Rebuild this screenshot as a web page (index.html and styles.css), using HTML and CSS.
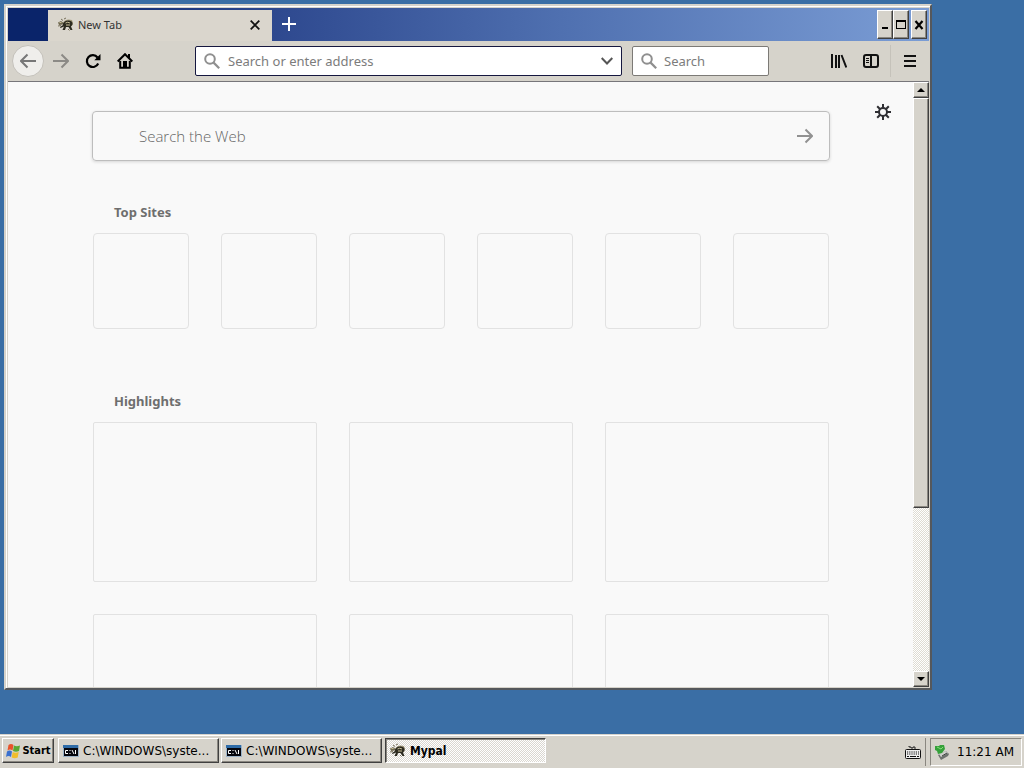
FILE: index.html
```html
<!DOCTYPE html>
<html lang="en">
<head>
<meta charset="utf-8">
<title>New Tab</title>
<link rel="stylesheet" href="styles.css">
</head>
<body>
<svg class="defs" aria-hidden="true">
  <symbol id="turtle" viewBox="0 0 16 16">
    <path d="M5 5.500Q8 1 14 3l1 3-1 3H9L5 9z" fill="#a39a7c"/>
    <path d="M0 5.500l3-1.500 2 1.500v2L1 8z" fill="#6e6850"/>
    <path d="M5 6.500Q7 3 11 3.500t3.500 4L13 9.500l1.500 3.500h-2L10.500 10H8l-1 3H4.500L6 9.500 2.500 11 2 10l3-2z" fill="#2c2b20"/>
    <path d="M7.500 6q2-1.500 4.500 0M8 8h4M1.500 5.500h2" stroke="#c8bf96" fill="none"/>
    <path d="M3 2l2 1.500M6 2l2-1M0 9l3-.5M10 12l1.500 1.500" stroke="#77705a" fill="none"/>
  </symbol>
  <symbol id="console" viewBox="0 0 16 16">
    <path d="M0 2h16v12H0z" fill="#9cb3c8"/>
    <path d="M0 2h15v3H0z" fill="#2f6ca8"/>
    <path d="M1 5h14v8H1z" fill="#05060c"/>
    <path d="M5 7.500H2.500v3H5M7 7v1M7 10v1M9 7l2 4M12.500 7v4" stroke="#fff" fill="none"/>
  </symbol>
  <symbol id="lens" viewBox="0 0 16 16">
    <circle cx="6" cy="6" r="4.800" fill="none" stroke="#8f8f8f" stroke-width="2"/>
    <path d="M9.600 9.600l5.600 5.600" stroke="#8f8f8f" stroke-width="2.200"/>
  </symbol>
  <symbol id="arrow" viewBox="0 0 16 16">
    <path d="M0 8h14.500M8.500 1.500L15 8l-6.500 6.500" fill="none" stroke="currentColor" stroke-width="2"/>
  </symbol>
</svg>

<div class="desktop">
  <section class="window">
    <header class="titlebar">
      <div class="tab">
        <svg class="icon"><use href="#turtle"/></svg>
        <span class="tab-title">New Tab</span>
        <button class="flat tab-close" aria-label="Close tab"><svg viewBox="0 0 10 10"><path d="M.7.7l8.600 8.600M9.300.7L.7 9.300" stroke="#111" stroke-width="1.800"/></svg></button>
      </div>
      <button class="flat new-tab" aria-label="New tab"><svg viewBox="0 0 14 14"><path d="M7 0v14M0 7h14" stroke="#fff" stroke-width="2"/></svg></button>
      <div class="controls">
        <button class="raised" aria-label="Minimize"><svg viewBox="0 0 12 12"><path d="M3 8h6v2H3z"/></svg></button>
        <button class="raised" aria-label="Maximize"><svg viewBox="0 0 12 12"><path d="M1 1h10v9H1zM2 3v6h8V3z" fill-rule="evenodd"/></svg></button>
        <button class="raised close" aria-label="Close"><svg viewBox="0 0 12 12"><path d="M2.500 2l7 8M9.500 2l-7 8" stroke="#000" stroke-width="2.200"/></svg></button>
      </div>
    </header>

    <nav class="toolbar" aria-label="Navigation">
      <button class="flat tool back" aria-label="Back"><svg class="icon flip"><use href="#arrow"/></svg></button>
      <button class="flat tool dim" aria-label="Forward"><svg class="icon"><use href="#arrow"/></svg></button>
      <button class="flat tool" aria-label="Reload"><svg class="icon" viewBox="0 0 16 16"><path d="M13.200 10.500A5.900 5.900 0 1 1 12.500 4.500" fill="none" stroke="#000" stroke-width="2.200"/><path d="M15.500 1v6.200H9.300z"/></svg></button>
      <button class="flat tool" aria-label="Home"><svg class="icon" viewBox="0 0 16 16"><path d="M.7 8.500L8 1.200l7.300 7.300" fill="none" stroke="#000" stroke-width="2"/><path d="M3.200 8v6.800h9.600V8" fill="none" stroke="#000" stroke-width="2"/><path d="M6 8h4v6H6zM11 1h2v4h-2z"/></svg></button>
      <div class="field address">
        <svg class="icon"><use href="#lens"/></svg>
        <input type="text" aria-label="Address" placeholder="Search or enter address">
        <button class="flat" aria-label="Show history"><svg class="chevron" viewBox="0 0 12 8"><path d="M.7 1L6 6.500 11.300 1" fill="none" stroke="#555" stroke-width="2"/></svg></button>
      </div>
      <div class="field quick">
        <svg class="icon"><use href="#lens"/></svg>
        <input type="text" aria-label="Search" placeholder="Search">
      </div>
      <div class="tools-end">
        <button class="flat tool" aria-label="Library"><svg class="icon" viewBox="0 0 16 16"><path d="M1 1v14M5 2v13M8 2v13M10.500 2l4.800 12.500" fill="none" stroke="#111" stroke-width="2"/></svg></button>
        <button class="flat tool" aria-label="Sidebars"><svg class="icon" viewBox="0 0 16 16"><rect x="1" y="2" width="14" height="12" rx="2" fill="none" stroke="#111" stroke-width="2"/><path d="M8 2v12" stroke="#111" stroke-width="2"/><path d="M3 5.500h3M3 7.500h3M3 9.500h3" stroke="#111"/></svg></button>
        <button class="flat tool menu" aria-label="Open menu"><svg class="icon" viewBox="0 0 16 16"><path d="M2 3h12M2 8h12M2 13h12" stroke="#111" stroke-width="2"/></svg></button>
      </div>
    </nav>

    <div class="viewport">
      <main class="page">
        <button class="flat gear" aria-label="Customize"><svg class="icon" viewBox="0 0 16 16"><circle cx="8" cy="8" r="4" fill="none" stroke="#2f2f33" stroke-width="2"/><path d="M8 0v4M8 12v4M0 8h4M12 8h4M2.200 2.200l3 3M10.800 10.800l3 3M2.200 13.800l3-3M10.800 5.200l3-3" stroke="#2f2f33" stroke-width="2"/></svg></button>
        <form class="web-search">
          <input type="text" aria-label="Search the Web" placeholder="Search the Web">
          <button class="flat" type="button" aria-label="Submit search"><svg class="icon"><use href="#arrow"/></svg></button>
        </form>
        <section class="sites">
          <h2>Top Sites</h2>
          <div class="grid six"><div></div><div></div><div></div><div></div><div></div><div></div></div>
        </section>
        <section>
          <h2>Highlights</h2>
          <div class="grid three"><div></div><div></div><div></div><div></div><div></div><div></div></div>
        </section>
      </main>
      <div class="scrollbar">
        <button class="raised" aria-label="Scroll up"><svg viewBox="0 0 8 4"><path d="M0 4l4-4 4 4z"/></svg></button>
        <div class="thumb raised"></div>
        <div class="track"></div>
        <button class="raised" aria-label="Scroll down"><svg viewBox="0 0 8 4"><path d="M0 0l4 4 4-4z"/></svg></button>
      </div>
    </div>
  </section>
</div>

<footer class="taskbar">
  <button class="raised start">
    <svg class="icon" viewBox="0 0 16 16"><path d="M3.500 2q2.500-2 5 0l-1 5.500q-2.500-2-5 0z" fill="#e8532a"/><path d="M9 2.500q2.500 1.500 6 0L14 8q-3 1.500-6 0z" fill="#5aa832"/><path d="M2 8.500q2.500-2 5 0l-1 5.500q-2.500-2-5 0z" fill="#3a70cf"/><path d="M7.700 9q2.500 1.500 6 0l-1 5.500q-3 1.500-6 0z" fill="#f0bd2c"/></svg>
    Start
  </button>
  <button class="raised task"><svg class="icon"><use href="#console"/></svg><span>C:\WINDOWS\syste...</span></button>
  <button class="raised task"><svg class="icon"><use href="#console"/></svg><span>C:\WINDOWS\syste...</span></button>
  <button class="task active"><svg class="icon"><use href="#turtle"/></svg><span>Mypal</span></button>
  <button class="flat keyboard" aria-label="Input language"><svg class="icon" viewBox="0 0 16 16"><path d="M4 2v1h2v1h2V3h2v2" fill="none" stroke="#222"/><rect x=".5" y="5.500" width="15" height="9" rx="1" fill="#eee" stroke="#111"/><path d="M2 8h12M2 10h12" stroke="#111" stroke-width="1.200" stroke-dasharray="1.200 1"/><path d="M2 12.500h2M5 12.500h6M12 12.500h2" stroke="#111"/></svg></button>
  <div class="tray">
    <svg class="icon" viewBox="0 0 16 16"><path d="M4 11l8-4 3 3-1 2-7 4z" fill="#6d716e"/><path d="M5 10l7-3 2 2-7 4z" fill="#cdd0cb"/><path d="M8 12l5-3" stroke="#3c3f3d"/><path d="M1 2h4l1-1 4 0 1 4-3 4-4 1-1-3-2-1z" fill="#35a13a"/><path d="M3 3l4 2 2-2" stroke="#87e07a" fill="none"/></svg>
    <time>11:21 AM</time>
  </div>
</footer>
</body>
</html>
```

FILE: styles.css
```css
* { box-sizing: border-box; }

:root {
  --face: #d6d3cb;
  --navy: #0a246a;
  --ui: "Noto Sans", "Open Sans", sans-serif;
  --classic: "DejaVu Sans", sans-serif;
  --classic-narrow: "DejaVu Sans Condensed", "DejaVu Sans", sans-serif;
}

body {
  margin: 0;
  height: 100vh;
  display: flex;
  flex-direction: column;
  overflow: hidden;
  background: #3a6ea5;
  font-family: var(--ui);
}

.defs { display: none; }
svg { display: block; flex: none; }
.icon { width: 16px; height: 16px; }

button {
  display: flex;
  align-items: center;
  justify-content: center;
  margin: 0;
  padding: 0;
  border: 0;
  color: #000;
  font: inherit;
}
.flat { background: none; }

.raised {
  background: var(--face);
  border: 1px solid;
  border-color: #fff #404040 #404040 #fff;
  box-shadow: inset -1px -1px #8a8780;
}

input {
  flex: 1;
  min-width: 0;
  padding: 0;
  border: 0;
  outline: 0;
  background: none;
  font: inherit;
  color: #333;
}
input::placeholder { color: #7c7c7c; opacity: 1; }

.desktop {
  flex: 1;
  min-height: 0;
  display: flex;
  padding: 4px 92px 44px 4px;
}

.window {
  flex: 1;
  min-width: 0;
  display: flex;
  flex-direction: column;
  padding: 2px 1px 1px 2px;
  border: 2px solid;
  border-color: #d6d3cb #55585c #55585c #d6d3cb;
  background: var(--face);
  box-shadow: inset 1px 1px #fff;
}

.titlebar {
  flex: none;
  display: flex;
  height: 33px;
  padding: 2px 2px 0 40px;
  background: linear-gradient(90deg, var(--navy) 4%, #2f4a90 30%, #4f70b0 60%, #7b9dd5);
}
.tab {
  display: flex;
  align-items: center;
  width: 224px;
  padding: 0 12px 2px 10px;
  gap: 4px;
  background: #dad6cd;
  color: #333;
  font-size: 11px;
}
.tab-title { flex: 1; }
.tab-close svg { width: 10px; height: 10px; }
.new-tab { width: 34px; height: 28px; }
.new-tab svg { width: 14px; height: 14px; }
.controls { display: flex; margin-left: auto; height: 29px; }
.controls button { width: 16px; }
.controls .close { margin-left: 2px; }
.controls svg { width: 12px; height: 12px; }

.toolbar {
  flex: none;
  display: flex;
  align-items: center;
  height: 41px;
  padding: 0 3px 0 4px;
  border-bottom: 1px solid #77767a;
}
.tool { width: 32px; height: 32px; flex: none; }
.back {
  margin-right: 1px;
  border: 1px solid #c4c1ba;
  border-radius: 50%;
  background: #efeeeb;
  color: #777;
}
.dim { color: #8c8a86; }
.flip { transform: scaleX(-1); }

.field {
  display: flex;
  align-items: center;
  gap: 8px;
  height: 30px;
  padding: 0 8px;
  border: 1px solid #7c7a76;
  border-radius: 2px;
  background: #fff;
  font-size: 13px;
}
.address { flex: 1; margin-left: 54px; border-color: #15173f; }
.chevron { width: 12px; height: 8px; }
.quick { width: 137px; margin-left: 10px; gap: 7px; }
.tools-end { display: flex; margin-left: 54px; }
.menu {
  width: 36px;
  margin-left: 3px;
  padding-left: 3px;
  border-left: 1px solid #c5c2ba;
}

.viewport { flex: 1; min-height: 0; display: flex; }
.page {
  position: relative;
  flex: 1;
  overflow: hidden;
  padding: 29px 83px 0 84px;
  background: #f9f9f9;
}
.gear { position: absolute; top: 22px; right: 22px; }

.web-search {
  display: flex;
  align-items: center;
  height: 50px;
  margin: 0 0 41px;
  padding: 0 16px 0 46px;
  border: 1px solid #bdbdbd;
  border-radius: 4px;
  box-shadow: 0 1px 3px #d5d5d5;
  font: 300 15px/24px "Open Sans", "Noto Sans", sans-serif;
}
.web-search input::placeholder { color: #666; }
.web-search button { color: #919191; }
.sites { margin-bottom: 62px; }

h2 {
  margin: 0 0 11px;
  padding-left: 22px;
  color: #6e6e6e;
  font-size: 13px;
  line-height: 20px;
}
.grid { display: grid; gap: 32px; padding: 0 1px; }
.grid > div { border: 1px solid #e2e2e2; border-radius: 4px; }
.six { grid-template-columns: repeat(6, 1fr); }
.six > div { height: 96px; }
.three { grid-template-columns: repeat(3, 1fr); }
.three > div { height: 160px; border-radius: 2px; }

.scrollbar, .track {
  background: repeating-conic-gradient(#fff 0 25%, #dedbd2 0 50%) 0 0 / 2px 2px;
}
.scrollbar { display: flex; flex-direction: column; width: 16px; }
.scrollbar button { height: 16px; flex: none; }
.scrollbar svg { width: 8px; height: 4px; }
.thumb { flex: 408; }
.track { flex: 163; }

.taskbar {
  flex: none;
  display: flex;
  align-items: center;
  gap: 2px;
  height: 34px;
  padding: 0 2px;
  background: var(--face);
  border-top: 1px solid #d6d3cb;
  box-shadow: inset 0 1px #fff;
  font-family: var(--classic);
  font-size: 12px;
}
.taskbar > button { height: 25px; margin-bottom: 2px; }
.start {
  width: 52px;
  margin-right: 2px;
  gap: 1px;
  font: bold 11px var(--classic-narrow);
}
.task { width: 161px; padding: 0 4px; gap: 4px; justify-content: flex-start; }
.taskbar .active {
  margin-left: 1px;
  border: 1px solid;
  border-color: #404040 #fff #fff #404040;
  box-shadow: inset 1px 1px #8a8780;
  background: repeating-conic-gradient(#fff 0 25%, #dad7d0 0 50%) 0 0 / 2px 2px;
  font: bold 12px var(--classic-narrow);
}
.taskbar .keyboard {
  height: 28px;
  margin: 0 0 0 auto;
  padding-right: 4px;
  border-right: 1px solid #8a8780;
}
.tray {
  display: flex;
  align-items: center;
  justify-content: space-between;
  width: 92px;
  height: 28px;
  margin-left: 2px;
  padding: 0 7px 0 3px;
  border: 1px solid;
  border-color: #8a8780 #fff #fff #8a8780;
}
```
